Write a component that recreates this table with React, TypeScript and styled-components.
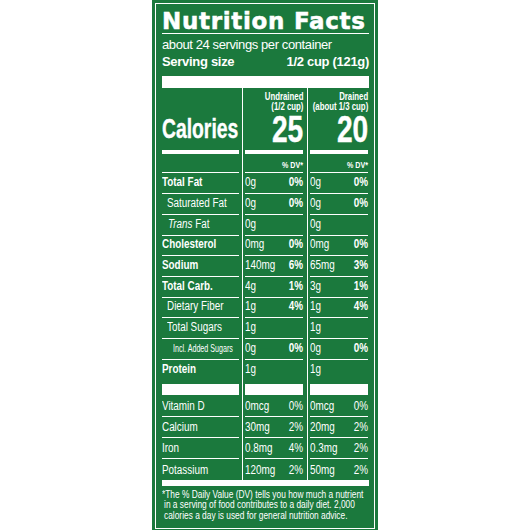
import React from "react";
import styled, {createGlobalStyle} from "styled-components";

const GREEN = "#1b793d";
const sans = `"Liberation Sans", Arial, sans-serif`;
const heavy = `"DejaVu Sans", "Liberation Sans", sans-serif`;

type Cell = [string, string?];
type Nutrient = {
    name: React.ReactNode
    bold?: boolean
    indent?: number
    small?: boolean
    a: Cell
    b: Cell
}

const nutrients: Nutrient[] = [
    {name: "Total Fat", bold: true, a: ["0g", "0%"], b: ["0g", "0%"]},
    {name: "Saturated Fat", indent: 5, a: ["0g", "0%"], b: ["0g", "0%"]},
    {name: <><i>Trans</i> Fat</>, indent: 6, a: ["0g"], b: ["0g"]},
    {name: "Cholesterol", bold: true, a: ["0mg", "0%"], b: ["0mg", "0%"]},
    {name: "Sodium", bold: true, a: ["140mg", "6%"], b: ["65mg", "3%"]},
    {name: "Total Carb.", bold: true, a: ["4g", "1%"], b: ["3g", "1%"]},
    {name: "Dietary Fiber", indent: 5, a: ["1g", "4%"], b: ["1g", "4%"]},
    {name: "Total Sugars", indent: 5, a: ["1g"], b: ["1g"]},
    {name: "Incl. Added Sugars", indent: 11, small: true, a: ["0g", "0%"], b: ["0g", "0%"]},
    {name: "Protein", bold: true, a: ["1g"], b: ["1g"]},
]

const vitamins: Nutrient[] = [
    {name: "Vitamin D", a: ["0mcg", "0%"], b: ["0mcg", "0%"]},
    {name: "Calcium", a: ["30mg", "2%"], b: ["20mg", "2%"]},
    {name: "Iron", a: ["0.8mg", "4%"], b: ["0.3mg", "2%"]},
    {name: "Potassium", a: ["120mg", "2%"], b: ["50mg", "2%"]},
]

// the label uses a condensed face, so texts are squeezed sideways
export default function App() {
    return (
        <Page>
            <GlobalStyle/>
            <LabelBox>
                <Frame>
                    <Title>Nutrition Facts</Title>
                    <Servings>about 24 servings per container</Servings>
                    <ServingSize>
                        <span>Serving size</span>
                        <span>1/2 cup (121g)</span>
                    </ServingSize>
                    <Bar $h={12} $gap={6.8}/>

                    <Row>
                        <Col $pos={0}>
                            <HeadTop $left><Calories>Calories</Calories></HeadTop>
                            <HeadBar/>
                            <HeadDv/>
                        </Col>
                        <Col $pos={1}>
                            <HeadTop>
                                <SubLabel>Undrained<br/>(1/2 cup)</SubLabel>
                                <BigNum>25</BigNum>
                            </HeadTop>
                            <HeadBar/>
                            <HeadDv><DvText>% DV*</DvText></HeadDv>
                        </Col>
                        <Col $pos={2}>
                            <HeadTop>
                                <SubLabel>Drained<br/>(about 1/3 cup)</SubLabel>
                                <BigNum>20</BigNum>
                            </HeadTop>
                            <HeadBar/>
                            <HeadDv><DvText>% DV*</DvText></HeadDv>
                        </Col>
                    </Row>

                    {nutrients.map((n, i) => (
                        <Row key={i}>
                            <Col $pos={0}>
                                <Line $rule={i < nutrients.length - 1} $h={20.7} $lift>
                                    <Name $bold={n.bold} $indent={n.indent} $small={n.small}>{n.name}</Name>
                                </Line>
                            </Col>
                            {[n.a, n.b].map((v, j) => (
                                <Col $pos={j + 1} key={j}>
                                    <Line $rule={i < nutrients.length - 1} $h={20.7} $lift>
                                        <Amount>{v[0]}</Amount>
                                        {v[1] && <Pct $bold>{v[1]}</Pct>}
                                    </Line>
                                </Col>
                            ))}
                        </Row>
                    ))}

                    <Row>
                        {[0, 1, 2].map(p => (
                            <Col $pos={p} key={p}>
                                <ColBar/>
                            </Col>
                        ))}
                    </Row>

                    {vitamins.map((n, i) => (
                        <Row key={i}>
                            <Col $pos={0}>
                                <Line $rule={i < vitamins.length - 1} $h={21}>
                                    <Name>{n.name}</Name>
                                </Line>
                            </Col>
                            {[n.a, n.b].map((v, j) => (
                                <Col $pos={j + 1} key={j}>
                                    <Line $rule={i < vitamins.length - 1} $h={21}>
                                        <Amount>{v[0]}</Amount>
                                        <Pct>{v[1]}</Pct>
                                    </Line>
                                </Col>
                            ))}
                        </Row>
                    ))}

                    <Bar $h={6}/>
                    <Footnote>
                        *The % Daily Value (DV) tells you how much a nutrient<br/>
                        in a serving of food contributes to a daily diet. 2,000<br/>
                        calories a day is used for general nutrition advice.
                    </Footnote>
                </Frame>
            </LabelBox>
        </Page>
    )
}

const GlobalStyle = createGlobalStyle`
    html, body {
        margin: 0;
        padding: 0;
        background: #fff;
        overflow: hidden;
    }
`

const Page = styled.div`
    display: flex;
    justify-content: center;
    width: 530px;
    height: 530px;
`

const LabelBox = styled.div`
    width: 226px;
    height: 530px;
    box-sizing: border-box;
    padding: 3px 3px 1px 3px;
    background: ${GREEN};
    color: #fff;
    overflow: hidden;
`

const Frame = styled.div`
    height: 100%;
    box-sizing: border-box;
    border: 1px solid #fff;
    padding: 5.4px 5px 0 6px;
    display: flex;
    flex-direction: column;
`

const Title = styled.div`
    font-family: ${heavy};
    font-weight: bold;
    font-size: 23px;
    line-height: 24px;
    letter-spacing: 0.7px;
    white-space: nowrap;
    -webkit-text-stroke: 0.5px #fff;
    border-bottom: 1px solid #fff;
`

const Servings = styled.div`
    font-family: ${sans};
    font-size: 13px;
    line-height: 14px;
    letter-spacing: -0.4px;
    margin-top: 4.1px;
    white-space: nowrap;
`

const ServingSize = styled.div`
    display: flex;
    justify-content: space-between;
    font-family: ${sans};
    font-weight: bold;
    font-size: 13px;
    line-height: 14px;
    letter-spacing: -0.3px;
    margin-top: 2.7px;
    white-space: nowrap;
`

const Bar = styled.div<{ $h: number, $gap?: number }>`
    height: ${p => p.$h}px;
    background: #fff;
    margin-top: ${p => p.$gap || 0}px;
`

const Row = styled.div`
    display: grid;
    grid-template-columns: 80px 65px 61px;
    font-family: ${sans};
    font-size: 12.5px;
    line-height: 14px;
`

const Col = styled.div<{ $pos: number }>`
    box-sizing: border-box;
    min-width: 0;
    border-left: ${p => p.$pos ? "1px solid #fff" : "none"};
    padding: ${p => p.$pos === 0 ? "0 3px 0 0" : p.$pos === 1 ? "0 4px 0 2px" : "0 0 0 2px"};
`

const HeadTop = styled.div<{ $left?: boolean }>`
    height: 57px;
    box-sizing: border-box;
    padding: 3.2px 0 2px;
    display: flex;
    flex-direction: column;
    justify-content: ${p => p.$left ? "flex-end" : "space-between"};
    align-items: ${p => p.$left ? "flex-start" : "flex-end"};
`

const Calories = styled.div`
    font-weight: bold;
    font-size: 28px;
    line-height: 28px;
    white-space: nowrap;
    -webkit-text-stroke: 0.4px #fff;
    transform: scaleX(0.69);
    transform-origin: left center;
`

const SubLabel = styled.div`
    font-weight: bold;
    font-size: 11px;
    line-height: 10px;
    text-align: right;
    white-space: nowrap;
    transform: scaleX(0.71);
    transform-origin: right center;
`

const BigNum = styled.div`
    font-weight: bold;
    font-size: 37px;
    line-height: 30px;
    margin-bottom: -2px;
    -webkit-text-stroke: 0.4px #fff;
    transform: scaleX(0.76);
    transform-origin: right center;
`

const HeadBar = styled.div`
    height: 4px;
    margin-top: 5px;
    background: #fff;
`

const HeadDv = styled.div`
    height: 19.5px;
    box-sizing: border-box;
    padding-top: 3px;
    border-bottom: 1px solid #fff;
    text-align: right;
`

const DvText = styled.span`
    display: inline-block;
    font-weight: bold;
    font-size: 9.5px;
    line-height: 12px;
    white-space: nowrap;
    transform: scaleX(0.75);
    transform-origin: right center;
`

const Line = styled.div<{ $rule?: boolean, $h: number, $lift?: boolean }>`
    height: ${p => p.$h}px;
    box-sizing: border-box;
    padding-bottom: ${p => p.$lift ? 2 : 0}px;
    border-bottom: ${p => p.$rule ? "1px solid #fff" : "none"};
    display: flex;
    align-items: center;
    justify-content: space-between;
    white-space: nowrap;
`

const Name = styled.span<{ $bold?: boolean, $indent?: number, $small?: boolean }>`
    display: inline-block;
    flex-shrink: 0;
    font-weight: ${p => p.$bold ? "bold" : "normal"};
    margin-left: ${p => p.$indent || 0}px;
    font-size: ${p => p.$small ? 11.5 : 12.5}px;
    transform: scaleX(${p => p.$small ? 0.62 : 0.79});
    transform-origin: left center;
`

const Amount = styled.span`
    display: inline-block;
    flex-shrink: 0;
    transform: scaleX(0.79);
    transform-origin: left center;
`

const Pct = styled.span<{ $bold?: boolean }>`
    display: inline-block;
    flex-shrink: 0;
    font-weight: ${p => p.$bold ? "bold" : "normal"};
    transform: scaleX(0.79);
    transform-origin: right center;
`

const ColBar = styled.div`
    height: 11.5px;
    margin: 3.3px 0 1px;
    background: #fff;
`

const Footnote = styled.div`
    margin-top: 3.6px;
    font-family: ${sans};
    font-size: 10.2px;
    line-height: 10.7px;
    padding-left: 2.5px;
    text-indent: -2.5px;
    white-space: nowrap;
    transform: scaleX(0.82);
    transform-origin: left top;
`
